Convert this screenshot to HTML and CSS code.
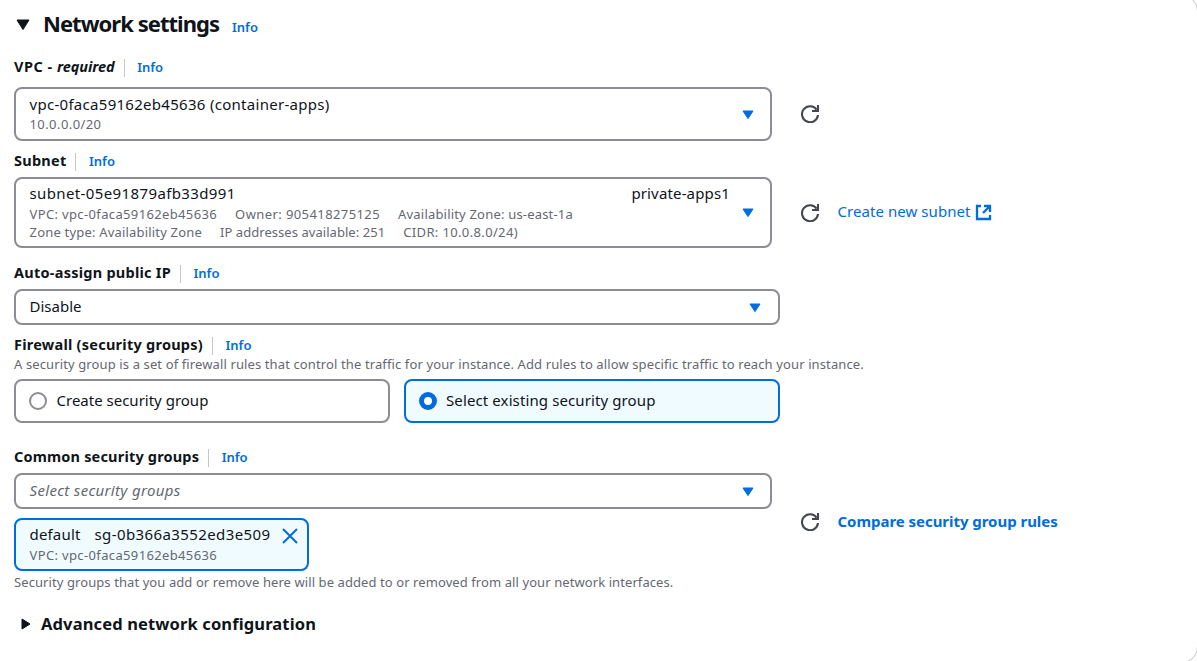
FILE: index.html
```
<!DOCTYPE html>
<html lang="en">
<head>
<meta charset="utf-8">
<title>Network settings</title>
<link rel="stylesheet" href="styles.css">
</head>
<body>
<svg class="defs" aria-hidden="true">
  <symbol id="refresh" viewBox="0 0 18 18"><path d="M17 10A8 8 0 1 1 15.6 4.6M17 0v6h-6" fill="none" stroke="#424650" stroke-width="2.1"/></symbol>
  <symbol id="down" viewBox="0 0 12 10"><path d="M1 1h10L6 8.6z" fill="#006ce0" stroke="#006ce0" stroke-linejoin="round"/></symbol>
</svg>
<main class="card">
  <header class="title-row">
    <svg class="title-caret" viewBox="0 0 14 12"><path d="M1 1h12L7 10.6z" fill="#0f141a" stroke="#0f141a" stroke-linejoin="round"/></svg>
    <h1 class="title">Network settings</h1>
    <a class="info">Info</a>
  </header>

  <div class="label vpc-label"><span class="vpc">VPC - </span><em>required</em><a class="info divided">Info</a></div>
  <div class="row">
    <div class="select tall">
      <div class="value">
        <div class="main id">vpc-0faca59162eb45636 (container-apps)</div>
        <div class="meta cidr-block">10.0.0.0/20</div>
      </div>
      <svg class="down"><use href="#down"/></svg>
    </div>
    <svg class="refresh"><use href="#refresh"/></svg>
  </div>

  <div class="label subnet-label"><span class="subnet">Subnet</span><a class="info divided">Info</a></div>
  <div class="row">
    <div class="select subnet-select">
      <div class="value">
        <div class="main split"><span class="subnet-id">subnet-05e91879afb33d991</span><span class="subnet-name">private-apps1</span></div>
        <div class="meta tags"><span class="vpc-id">VPC: vpc-0faca59162eb45636</span><span class="owner">Owner: 905418275125</span><span class="zone">Availability Zone: us-east-1a</span></div>
        <div class="meta tags"><span class="zone">Zone type: Availability Zone</span><span class="addresses">IP addresses available: 251</span><span class="vpc-id">CIDR: 10.0.8.0/24)</span></div>
      </div>
      <svg class="down"><use href="#down"/></svg>
    </div>
    <svg class="refresh"><use href="#refresh"/></svg>
    <a class="link create">Create new subnet</a>
    <svg class="external" viewBox="0 0 17 17"><path d="M6 2H2v13h13v-4M9 2h6v6M15 2L8 9" fill="none" stroke="#006ce0" stroke-width="2.3"/></svg>
  </div>

  <div class="label ip-label"><span>Auto-assign public IP</span><a class="info divided">Info</a></div>
  <div class="select wide"><div class="value main">Disable</div><svg class="down"><use href="#down"/></svg></div>

  <div class="label firewall-label"><span>Firewall (security groups)</span><a class="info divided">Info</a></div>
  <p class="hint rule-hint">A security group is a set of firewall rules that control the traffic for your instance. Add rules to allow specific traffic to reach your instance.</p>
  <div class="tiles">
    <div class="tile"><i class="radio"></i><span class="main">Create security group</span></div>
    <div class="tile selected"><i class="radio"></i><span class="main existing">Select existing security group</span></div>
  </div>

  <div class="label groups-label"><span>Common security groups</span><a class="info divided">Info</a></div>
  <div class="row">
    <div class="groups">
      <div class="select"><div class="value placeholder">Select security groups</div><svg class="down"><use href="#down"/></svg></div>
      <div class="token">
        <div>
          <div class="main token-name"><span class="default">default</span><span class="group-id">sg-0b366a3552ed3e509</span></div>
          <div class="meta vpc-id">VPC: vpc-0faca59162eb45636</div>
        </div>
        <svg class="close" viewBox="0 0 16 16"><path d="M1 1l14 14M15 1L1 15" stroke="#006ce0" stroke-width="2"/></svg>
      </div>
    </div>
    <svg class="refresh"><use href="#refresh"/></svg>
    <a class="link compare">Compare security group rules</a>
  </div>
  <p class="hint group-hint">Security groups that you add or remove here will be added to or removed from all your network interfaces.</p>

  <div class="advanced">
    <svg class="adv-caret" viewBox="0 0 10 12"><path d="M1 1v10l8-5z" fill="#0f141a" stroke="#0f141a" stroke-linejoin="round"/></svg>
    <h2 class="adv-title">Advanced network configuration</h2>
  </div>
</main>
</body>
</html>
```
FILE: styles.css
```
* { box-sizing: border-box; }
body {
  margin: 0;
  height: 661px;
  overflow: hidden;
  background: #fff;
  color: #0f141a;
  font: 15px/20px "Noto Sans", "Open Sans", sans-serif;
  white-space: nowrap;
}
svg { flex: none; display: block; }
h1, h2, p { margin: 0; }
.defs { display: none; }
.card {
  width: 1218px;
  height: 668px;
  margin: -5px 0 0 -20px;
  padding: 12px 0 0 33px;
  border: 1px solid #c6c6cd;
  border-radius: 16px;
}

.title-row { display: flex; align-items: center; height: 34px; padding-left: 2px; }
.title-caret { width: 14px; height: 12px; margin-right: 13px; }
.title { width: 176px; font-size: 22px; line-height: 32px; font-weight: 700; letter-spacing: -0.96px; margin: -4px 13px 0 0; }
.info { color: #006ce0; font-size: 13px; font-weight: 600; letter-spacing: 0; }
.title-row .info { padding-top: 4px; }

.label { display: flex; align-items: center; height: 20px; font-size: 14.5px; font-weight: 700; letter-spacing: 0.25px; }
.label > span, .label > em { margin-top: -2px; }
.divided { height: 18px; line-height: 16px; margin: 2px 0 0 9px; padding-left: 12.5px; border-left: 1px solid #c6c6cd; }
.vpc-label { margin: 15px 0 10px; }
.vpc { white-space: pre; letter-spacing: 0.5px; }
.vpc-label em { letter-spacing: -0.05px; }
.subnet { letter-spacing: 0.25px; }
.subnet-label { margin: 10px 0 6px; }
.ip-label { margin: 15px 0 6px; }
.firewall-label { margin-top: 10px; }
.groups-label { margin: 24px 0 6px; letter-spacing: 0.18px; }

.row { display: flex; align-items: center; }
.select {
  display: flex;
  align-items: center;
  width: 758px;
  height: 36px;
  padding: 0 16px 2px 13.5px;
  border: 2px solid #8c8c94;
  border-radius: 8px;
}
.wide { width: 766px; padding-right: 17px; }
.tall { height: 54px; }
.tall .value { padding-top: 2px; }
.subnet-select { height: 71px; }
.value { flex: 1; margin-right: 12px; }
.down { width: 12px; height: 10px; margin-top: 3px; }
.main { font-size: 15px; line-height: 20px; color: #0f141a; }
.meta { font-size: 13px; line-height: 18px; color: #656871; }
.id { letter-spacing: 0.29px; }
.cidr-block { letter-spacing: 0.42px; line-height: 20px; }
.split { display: flex; justify-content: space-between; height: 22px; line-height: 20px; }
.subnet-id { letter-spacing: 0.38px; }
.subnet-name { letter-spacing: 0.15px; }
.tags { display: flex; gap: 18px; }
.vpc-id { letter-spacing: 0.36px; }
.owner { letter-spacing: 0.41px; }
.zone { letter-spacing: 0.19px; }
.addresses { letter-spacing: 0.05px; }
.placeholder { color: #656871; font-style: italic; letter-spacing: 0.32px; }

.refresh { width: 18px; height: 18px; margin: 0 18.5px 0 29px; }
.link { color: #006ce0; letter-spacing: 0.06px; padding-bottom: 2px; }
.create { padding-bottom: 3px; }
.external { width: 17px; height: 17px; margin-left: 4px; }
.compare { font-weight: 700; letter-spacing: -0.04px; }

.hint { font-size: 13px; line-height: 18px; color: #656871; }
.rule-hint { letter-spacing: 0.118px; }
.group-hint { margin-top: 2px; letter-spacing: 0.085px; }

.tiles { display: flex; gap: 14px; margin-top: 6px; }
.tile { display: flex; align-items: center; width: 376px; height: 44px; padding-left: 13px; border: 2px solid #8c8c94; border-radius: 8px; }
.tile .main { margin-top: -2px; }
.radio { width: 18px; height: 18px; margin-right: 9.5px; border: 2px solid #8c8c94; border-radius: 50%; background: #fff; }
.selected { border-color: #006ce0; background: #f0fbff; }
.selected .radio { margin-right: 9px; border: 5px solid #006ce0; }
.existing { letter-spacing: 0.11px; }

.token { display: flex; width: 295px; height: 53px; margin-top: 9px; padding: 4px 0 0 13.5px; border: 2px solid #006ce0; border-radius: 8px; background: #f0fbff; }
.token-name { display: flex; gap: 14px; }
.token .meta { line-height: 22px; }
.default { letter-spacing: 0.17px; }
.group-id { letter-spacing: 0.4px; }
.close { width: 16px; height: 16px; margin: 4px 0 0 11px; }

.advanced { display: flex; align-items: center; height: 24px; margin-top: 21px; padding-left: 7px; }
.adv-caret { width: 10px; height: 12px; margin-right: 10px; }
.adv-title { font-size: 16.5px; line-height: 24px; font-weight: 700; letter-spacing: 0.13px; }
```
